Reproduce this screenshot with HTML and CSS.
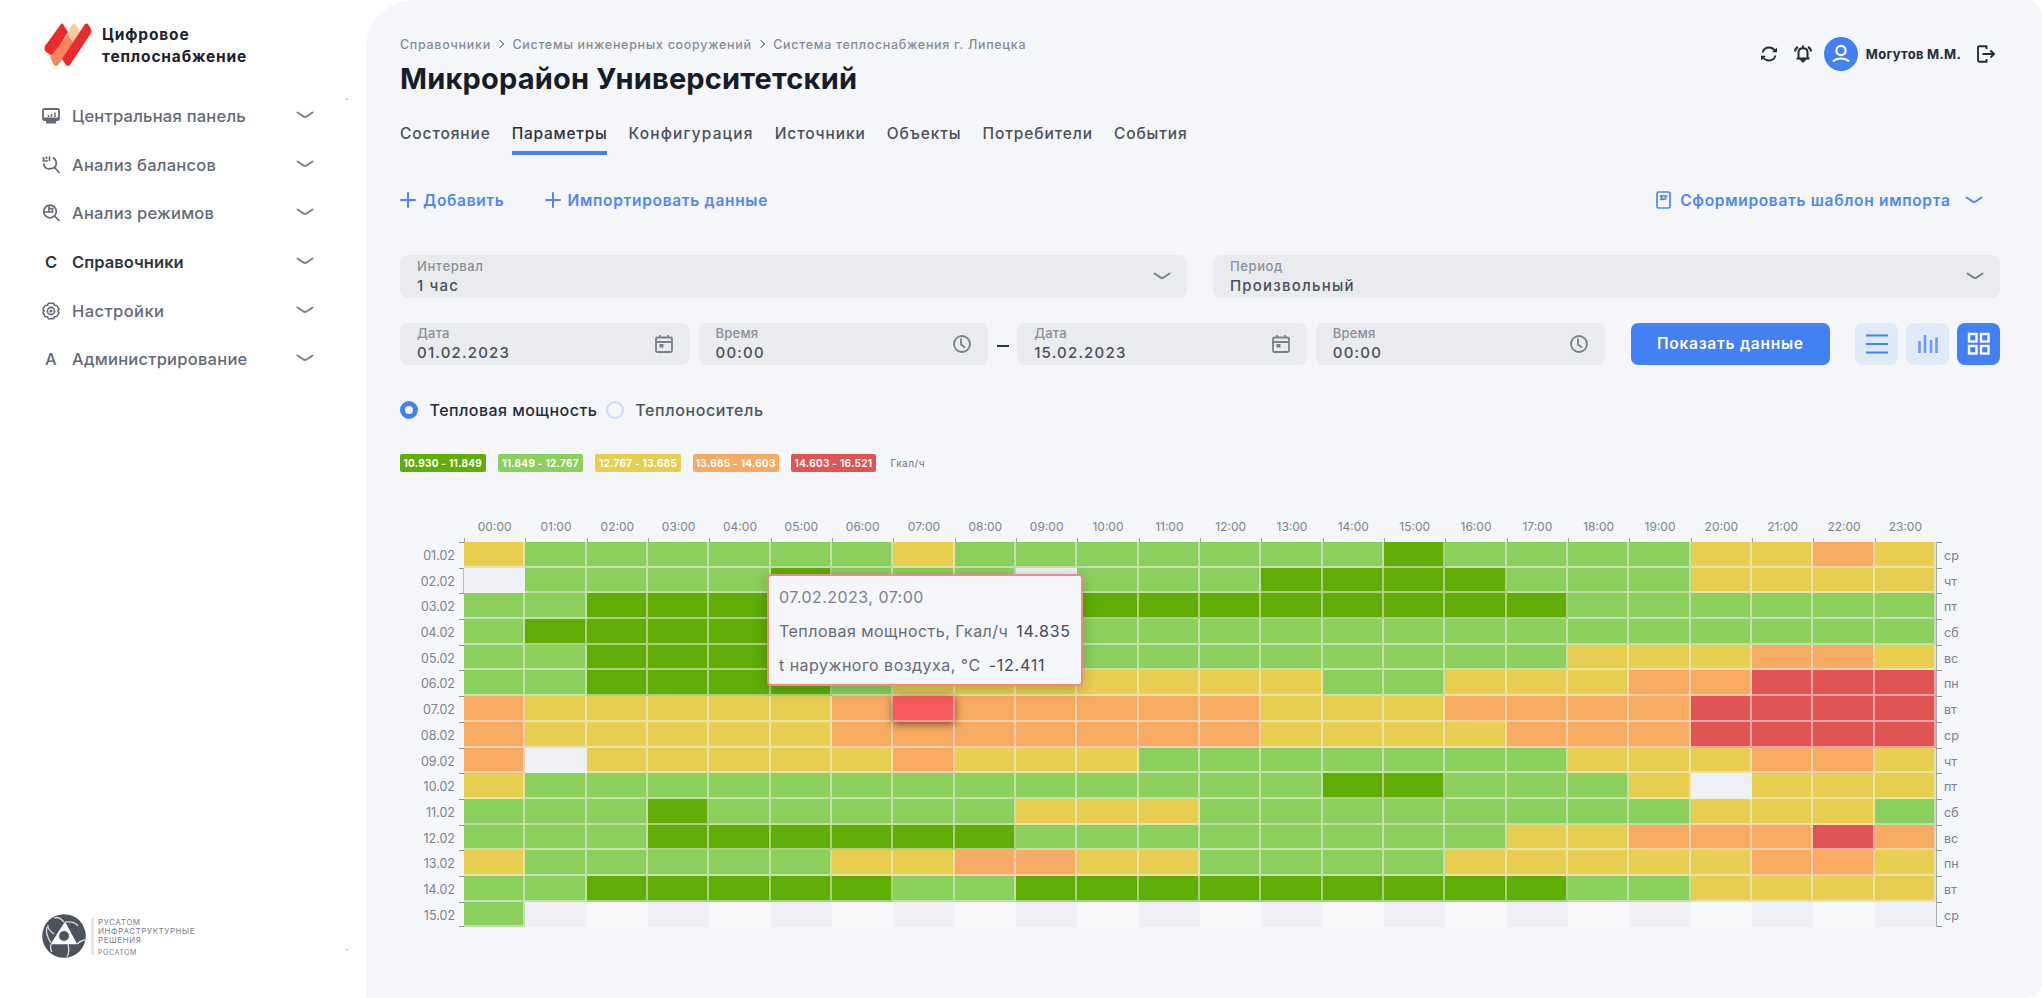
FILE: index.html
```html
<!DOCTYPE html>
<html lang="ru">
<head>
<meta charset="utf-8">
<title>Цифровое теплоснабжение</title>
<link rel="stylesheet" href="styles.css">
</head>
<body>
<svg width="0" height="0" class="sprite">
  <symbol id="chev" viewBox="0 0 18 8"><path d="M1.5 1.5L7 5.2Q9 6.6 11 5.2L16.5 1.5" fill="none" stroke="currentColor" stroke-width="2" stroke-linecap="round"/></symbol>
  <symbol id="plus" viewBox="0 0 16 16"><path d="M8 1v14M1 8h14" stroke="currentColor" stroke-width="2" stroke-linecap="round"/></symbol>
  <symbol id="cal" viewBox="0 0 20 20"><path d="M2 5q0-1.500 1.500-1.500h13Q18 3.500 18 5v11.500q0 1.500-1.500 1.500h-13Q2 18 2 16.500zM2 8h16M6 1v3.500M14 1v3.500" fill="none" stroke="currentColor" stroke-width="1.800"/><rect x="5.500" y="10" width="4" height="3.500" fill="currentColor"/></symbol>
  <symbol id="clock" viewBox="0 0 20 20"><circle cx="10" cy="10" r="8" fill="none" stroke="currentColor" stroke-width="1.800"/><path d="M9 4.500v6l4 3" fill="none" stroke="currentColor" stroke-width="1.800"/></symbol>
</svg>
<div class="app">
  <aside class="side">
    <div class="brand">
      <svg width="48" height="44" viewBox="0 0 48 44">
        <path d="M28 2Q30 0 32 2L36 8 24 28 18 20z" fill="#fbcb9c"/>
        <path d="M17 1Q18 0 19 1L24 9 9 34 1 28Q0 26 1 23z" fill="#e82c2e"/>
        <path d="M24 12L30 21 14 42Q12 44 10 42L6 34z" fill="#f6845f"/>
        <path d="M41 1Q43 0 44 1L47 6Q48 8 47 10L26 42Q24 44 22 42L18 36z" fill="#e82c2e"/>
      </svg>
      <div class="brand-name">Цифровое<br>теплоснабжение</div>
    </div>
    <nav class="menu">
      <a class="item"><span class="mi"><svg width="18" height="18" viewBox="0 0 18 18" fill="none" stroke="currentColor"><rect x="1" y="2" width="16" height="11" rx="1.500" stroke-width="1.800"/><path d="M1 11.500h16" stroke-width="2"/><path d="M4 15h10" stroke-width="3"/><path d="M6.500 10V8M9.500 10V7M13 10V5.500" stroke-width="1.500"/></svg></span><span>Центральная панель</span><svg class="chev" width="18" height="8"><use href="#chev"/></svg></a>
      <a class="item"><span class="mi"><svg width="19" height="18" viewBox="0 0 19 18" fill="none" stroke="currentColor" stroke-width="1.700"><path d="M11 1.500Q16 5 13.500 10.500 9 14.500 4 12 2 10.500 1.500 7.500M12.500 11.500L17.500 17"/><path d="M1.500 1v4h4.500M4.500 3V.5M7.500 5V.5"/></svg></span><span>Анализ балансов</span><svg class="chev" width="18" height="8"><use href="#chev"/></svg></a>
      <a class="item"><span class="mi"><svg width="19" height="18" viewBox="0 0 19 18" fill="none" stroke="currentColor" stroke-width="1.700"><circle cx="8" cy="7.500" r="6.300"/><path d="M12.500 12L17.500 17M7 1v7H2"/><path d="M7 4.500h3.500V8H7"/></svg></span><span>Анализ режимов</span><svg class="chev" width="18" height="8"><use href="#chev"/></svg></a>
      <a class="item on"><span class="mi">С</span><span>Справочники</span><svg class="chev" width="18" height="8"><use href="#chev"/></svg></a>
      <a class="item wide"><span class="mi"><svg width="18" height="18" viewBox="0 0 18 18" fill="none" stroke="currentColor" stroke-width="1.600"><path d="M6.500 1.200h5l1 2 2.300.2 2.200 3.800-1.200 1.800 1.200 1.800-2.200 3.800-2.300.2-1 2h-5l-1-2-2.300-.2L1 10.800 2.200 9 1 7.200l2.200-3.800 2.300-.2z"/><circle cx="9" cy="9" r="3.600"/><circle cx="9" cy="9" r=".8"/></svg></span><span>Настройки</span><svg class="chev" width="18" height="8"><use href="#chev"/></svg></a>
      <a class="item"><span class="mi">А</span><span>Администрирование</span><svg class="chev" width="18" height="8"><use href="#chev"/></svg></a>
    </nav>
    <i class="scroll up"></i><i class="scroll down"></i>
    <div class="owner">
      <svg width="44" height="44" viewBox="0 0 44 44">
        <circle cx="22" cy="22" r="21.800" fill="#4d535e"/>
        <path d="M23 9L34 29.500H10z" fill="#fff" stroke="#fff" stroke-width="1.500" stroke-linejoin="round"/>
        <circle cx="22" cy="22" r="5" fill="#4d535e"/>
        <g fill="none" stroke="#d9dce0" stroke-width="1.300"><path d="M22 8Q17 2 12 4M23 8Q33 7 36 12M9 29Q3 20 5 13M9 30Q8 36 10 38M35 30Q40 26 43 26M26 30Q28 38 25 43M12 20Q5 15 6 11"/></g>
      </svg>
      <div class="owner-text"><span>РУСАТОМ</span><span>ИНФРАСТРУКТУРНЫЕ</span><span>РЕШЕНИЯ</span><small>РОСАТОМ</small></div>
    </div>
  </aside>

  <main class="main">
    <header class="top">
      <div class="crumbs"><span>Справочники</span><i></i><span>Системы инженерных сооружений</span><i></i><span>Система теплоснабжения г. Липецка</span></div>
      <div class="user">
        <svg width="18" height="18" viewBox="0 0 18 18" fill="none" stroke="currentColor" stroke-width="1.800"><path d="M2.500 7.500Q4 2.500 9 2.500q4 0 6.500 4M15.500 10.500Q14 15.500 9 15.500q-4 0-6.500-4"/><path d="M17 2.500v4.800h-5zM1 15.500v-4.800h5z" fill="currentColor" stroke="none"/></svg>
        <svg class="bell" width="20" height="20" viewBox="0 0 20 20" fill="none" stroke="currentColor" stroke-width="2"><path d="M3.500 14.500h13M5.500 14V8.500Q5.500 4.200 10 4.200t4.500 4.300V14M10 4V1.500M2 7.500Q2 4.500 5 3M18 7.500Q18 4.500 15 3"/><path d="M8 15.500h4l-2 2z" fill="currentColor"/></svg>
        <span class="ava"><svg width="20" height="20" viewBox="0 0 20 20" fill="none" stroke="#fff" stroke-width="2.200"><circle cx="10" cy="6.500" r="4.600"/><path d="M2 17.500q3-3 8-3t8 3"/></svg></span>
        <b>Могутов М.М.</b>
        <svg class="out" width="20" height="18" viewBox="0 0 20 18" fill="none" stroke="currentColor" stroke-width="1.900"><path d="M10.500 4V1.200H3.200Q2 1.200 2 2.400v13.200q0 1.200 1.200 1.200h7.300V14M6.500 9H18M14.500 5.500L18 9l-3.500 3.500"/></svg>
      </div>
    </header>
    <h1 class="title">Микрорайон Университетский</h1>
    <div class="tabs"><a>Состояние</a><a class="on">Параметры</a><a>Конфигурация</a><a>Источники</a><a>Объекты</a><a>Потребители</a><a>События</a></div>
    <div class="actions">
      <a class="act add"><svg width="16" height="16"><use href="#plus"/></svg><span>Добавить</span></a>
      <a class="act"><svg width="16" height="16"><use href="#plus"/></svg><span>Импортировать данные</span></a>
      <a class="act tpl"><svg width="15" height="18" viewBox="0 0 15 18" fill="none" stroke="currentColor" stroke-width="1.700"><rect x="1" y="1" width="13" height="16" rx="1.500"/><path d="M3.500 5h8M5.500 5v3h4v-3M4 8.500h4"/></svg><span>Сформировать шаблон импорта</span><svg class="chev" width="18" height="8"><use href="#chev"/></svg></a>
    </div>
    <div class="row sel">
      <div class="field"><div><label>Интервал</label><p>1 час</p></div><svg class="chev" width="18" height="8"><use href="#chev"/></svg></div>
      <div class="field"><div><label>Период</label><p>Произвольный</p></div><svg class="chev" width="18" height="8"><use href="#chev"/></svg></div>
    </div>
    <div class="row dates">
      <div class="field"><div><label>Дата</label><p>01.02.2023</p></div><svg width="20" height="20"><use href="#cal"/></svg></div>
      <div class="field"><div><label>Время</label><p>00:00</p></div><svg width="20" height="20"><use href="#clock"/></svg></div>
      <i class="dash"></i>
      <div class="field"><div><label>Дата</label><p>15.02.2023</p></div><svg width="20" height="20"><use href="#cal"/></svg></div>
      <div class="field"><div><label>Время</label><p>00:00</p></div><svg width="20" height="20"><use href="#clock"/></svg></div>
      <button class="show">Показать данные</button>
      <div class="views">
        <span class="view"><svg width="24" height="22" viewBox="0 0 24 22" stroke="currentColor" stroke-width="2.200"><path d="M1 2.500h22M1 11h22M1 19.500h22"/></svg></span>
        <span class="view"><svg width="22" height="22" viewBox="0 0 22 22" stroke="currentColor" stroke-width="2.600" opacity=".75"><path d="M2.500 20V8M8 20V2M14 20V7M19.500 20V4.500"/></svg></span>
        <span class="view on"><svg width="24" height="24" viewBox="0 0 24 24" fill="none" stroke="currentColor" stroke-width="2.400"><rect x="2" y="2" width="7.500" height="7.500"/><rect x="14" y="2" width="7.500" height="7.500"/><rect x="2" y="14" width="7.500" height="7.500"/><rect x="14" y="14" width="7.500" height="7.500"/></svg></span>
      </div>
    </div>
    <div class="radios"><i class="radio on"></i><span class="on">Тепловая мощность</span><i class="radio"></i><span>Теплоноситель</span></div>
    <div class="legend"><b class="D">10.930 - 11.849</b><b class="L">11.849 - 12.767</b><b class="Y">12.767 - 13.685</b><b class="O">13.685 - 14.603</b><b class="R">14.603 - 16.521</b><em>Гкал/ч</em></div>
    <div class="chart">
      <div class="hours" id="hours"></div>
      <div class="rows" id="rows"></div>
      <div class="tip">
        <p class="when">07.02.2023, 07:00</p>
        <p>Тепловая мощность, Гкал/ч <b>14.835</b></p>
        <p>t наружного воздуха, °C <b>-12.411</b></p>
      </div>
    </div>
  </main>
</div>
<script src="chart.js"></script>
</body>
</html>
```
FILE: chart.js
```js
// One string per day, one letter per hour; letters are the colour classes in styles.css.
var data = [
  'YLLLLLLYLLLLLLLDLLLLYYOY',
  'NLLLLDLLLNLLLDDDDLLLYYYY',
  'LLDDDDDDDDDDDDDDDDLLLLLL',
  'LDDDDDDDDDLLLLLLLLLLLLLL',
  'LLDDDDLLLLLLLLLLLLYYYOOY',
  'LLDDDDLYYYYYYYLLYYYOORRR',
  'OYYYYYOHOOOOOYYYOOOORRRR',
  'OYYYYYOOOOOOOYYYYOOORRRR',
  'ONYYYYYOYYYLLLLLLLYYYOOY',
  'YLLLLLLLLLLLLLDDLLLYNYYY',
  'LLLDLLLLLYYYLLLLLLLLYYYL',
  'LLLDDDDDDLLLLLLLLYYOOORO',
  'YLLLLLYYOOYYLLLLYYYYYOOY',
  'LLDDDDDLLDDDDDDDDDLLYYYY',
  'LNENENENENENENENENENENEN'
];
var days = ['ср', 'чт', 'пт', 'сб', 'вс', 'пн', 'вт'];
function pad(n) { return (n < 10 ? '0' : '') + n; }
var hours = '';
for (var h = 0; h < 24; h++) hours += '<span>' + pad(h) + ':00</span>';
document.getElementById('hours').innerHTML = hours;
document.getElementById('rows').innerHTML = data.map(function (line, i) {
  var cells = line.split('').map(function (c) { return '<i class="cell ' + c + '"></i>'; }).join('');
  return '<div class="line"><span class="date">' + pad(i + 1) + '.02</span><div class="cells">' + cells +
    '</div><span class="day">' + days[i % 7] + '</span></div>';
}).join('');
```
FILE: styles.css
```css
* { box-sizing: border-box; }
body { margin: 0; background: #fff; font-family: Inter, "Noto Sans", sans-serif; color: #4f5560; }
p, h1 { margin: 0; }
svg { display: block; flex: none; }
.sprite { position: absolute; }
.app { display: flex; width: 2042px; height: 998px; border-radius: 16px; overflow: hidden; background: #fff; }

.side { position: relative; width: 366px; display: flex; flex-direction: column; padding: 23px 0 40px 41px; }
.brand { display: flex; gap: 10px; padding-left: 3px; }
.brand-name { font-size: 15.500px; line-height: 21.500px; font-weight: 700; letter-spacing: .85px; color: #1d2230; padding-top: 1px; }
.menu { display: flex; flex-direction: column; padding-top: 24.500px; }
.item { display: flex; align-items: center; height: 48.700px; font-size: 16.500px; font-weight: 500; letter-spacing: .25px; width: 273px; color: #646a75; }
.item .mi { width: 20px; margin-right: 11px; display: flex; justify-content: center; }
.item .chev { margin-left: auto; margin-top: -2px; color: #7d828c; }
.item.on { color: #303642; font-weight: 600; letter-spacing: .05px; }
.item.wide { letter-spacing: .44px; }
.scroll { position: absolute; left: 345px; border: 2px solid transparent; }
.scroll.up { top: 96px; border-bottom-color: #c5c8cc; }
.scroll.down { top: 949px; border-top-color: #c5c8cc; }
.owner { display: flex; margin-top: auto; align-items: center; gap: 5px; padding-left: 1px; }
.owner-text { border-left: 3px solid #e4e6ea; height: 37px; padding-left: 4px; display: flex; flex-direction: column; font-size: 8px; line-height: 9px; letter-spacing: .57px; color: #7a808a; align-items: flex-start; }
.owner-text small { font-size: 7px; margin-top: 3px; }

.main { flex: 1; background: #f4f6f9; border-radius: 48px 0 0 0; padding: 36px 42px 0 34px; }
.top { display: flex; justify-content: space-between; height: 16px; }
.crumbs { display: flex; align-items: center; font-size: 12.500px; font-weight: 500; letter-spacing: .7px; color: #868c96; }
.crumbs i { width: 6px; height: 6px; border: solid #6b717b; border-width: 1.500px 1.500px 0 0; transform: rotate(45deg); margin: 0 9.500px 0 6px; }
.user { display: flex; align-items: center; color: #262b35; height: 36px; padding-right: 4px; }
.user b { font-size: 13px; font-weight: 700; letter-spacing: .27px; margin-left: 7.500px; }
.bell { margin: 0 11px 0 15px; }
.ava { width: 34px; height: 34px; border-radius: 50%; background: #4280f4; display: flex; align-items: center; justify-content: center; }
.out { margin-left: 15px; }
.title { font-size: 29px; line-height: 40px; font-weight: 700; letter-spacing: .19px; color: #171c28; margin-top: 6.500px; }
.tabs { display: flex; gap: 21px; margin-top: 18px; font-size: 15.500px; font-weight: 500; letter-spacing: .9px; color: #4a505b; }
.tabs a { height: 38.500px; line-height: 33px; }
.tabs .on { border-bottom: 4px solid #4280f4; color: #2c323e; letter-spacing: .73px; }
.tabs a:nth-child(3) { letter-spacing: 1.150px; }
.actions { display: flex; margin-top: 29px; height: 32px; color: #4f86f4; font-size: 15.500px; font-weight: 600; letter-spacing: .68px; }
.act { display: flex; align-items: center; gap: 7px; }
.add { margin-right: 40px; }
.tpl { margin-left: auto; gap: 9px; margin-right: 17px; }
.tpl .chev { margin-left: 5.500px; }

.row { display: flex; height: 42.500px; }
.field { background: #e9ebee; border-radius: 8px; display: flex; justify-content: space-between; align-items: center; padding: 0 16px 0 17px; color: #7a808a; }
.field label { display: block; font-size: 13px; line-height: 19px; font-weight: 500; letter-spacing: .6px; color: #8b9099; }
.field p { font-size: 15px; line-height: 20px; font-weight: 500; letter-spacing: 1.200px; color: #4a4f5a; }
.sel { margin-top: 39px; gap: 26px; }
.sel .field { flex: 1; }
.dates { margin-top: 25px; gap: 9px; }
.dates .field { width: 289.600px; }
.dates label { letter-spacing: .2px; }
.dash { width: 12px; height: 2px; background: #2c323e; align-self: center; margin: 4px -.5px 0; }
.show { margin-left: 16.500px; width: 199px; padding: 0; border: 0; border-radius: 7px; background: #4280f4; color: #fff; font: 600 15.500px Inter, sans-serif; letter-spacing: .74px; }
.views { display: flex; gap: 8px; margin-left: auto; }
.view { width: 43px; border-radius: 8px; background: #e0e9f8; color: #4280f4; display: flex; align-items: center; justify-content: center; }
.view.on { background: #4280f4; color: #fff; }

.radios { display: flex; align-items: center; height: 20px; margin-top: 34.500px; font-size: 16px; font-weight: 500; letter-spacing: .6px; }
.radio { width: 18px; height: 18px; border: 2px solid #c9dcfa; border-radius: 50%; }
.radio.on { border: 5px solid #4280f4; }
.radio + span { margin: 0 8.500px 0 11.500px; }
.radios span.on { color: #262c38; letter-spacing: .46px; }
.legend { display: flex; align-items: center; gap: 12.200px; margin-top: 34.500px; height: 18px; font-size: 10px; letter-spacing: .28px; }
.legend b { width: 85.500px; height: 17.500px; border-radius: 2px; color: #fff; display: flex; align-items: center; justify-content: center; }
.legend em { font-style: normal; color: #6b717b; letter-spacing: .52px; margin-left: 2px; }

.D { background: #5fad05; }
.L { background: #8bd05c; }
.Y { background: #e7ce50; }
.O { background: #f6aa62; }
.R { background: #e25353; }
.N { background: #eef0f6; }
.E { background: #f7f8f9; }

.chart { position: relative; margin-top: 44px; }
.hours { display: grid; grid-template-columns: repeat(24, 1fr); margin: 0 64px; height: 26px; font-size: 12px; line-height: 21px; text-align: center; color: #7d828b; background: repeating-linear-gradient(90deg, #9a9ea6 0 1px, transparent 1px 61.333px) bottom / 100% 4px no-repeat; }
.rows { background: linear-gradient(#a9adb4, #a9adb4) 63px 0 / 1px 100% no-repeat; }
.line { display: flex; height: 25.690px; align-items: center; }
.date, .day { font-size: 12.500px; height: 100%; line-height: 27.500px; color: #7d828b; background: linear-gradient(#8d9199, #8d9199) no-repeat; }
.date { width: 64px; padding-right: 9px; text-align: right; background-size: 5px 1px; background-position: 59px 0; }
.line:nth-child(2) .date { border-right: 1px solid #b9bcc3; padding-right: 8px; }
.rows { background: none; }
.cells { display: grid; grid-template-columns: repeat(24, 1fr); width: 1472px; height: 100%; }
.cell { box-shadow: inset -2px -2px rgba(244, 246, 249, .5); }
.cell.N, .cell.E { box-shadow: none; }
.cell.H { position: relative; background: #f65a5a; box-shadow: inset -2px -2px rgba(244, 246, 249, .4), 0 2px 8px rgba(60, 40, 20, .7); }
.day { padding-left: 7px; line-height: 28px; border-left: 1.500px solid #a9adb4; background-size: 5px 1px; }
.line:last-child .date { background: linear-gradient(#8d9199, #8d9199) 59px 0 / 5px 1px no-repeat, linear-gradient(#8d9199, #8d9199) 59px 100% / 5px 1px no-repeat; }
.line:last-child .day { background: linear-gradient(#8d9199, #8d9199) 0 0 / 5px 1px no-repeat, linear-gradient(#8d9199, #8d9199) 0 100% / 5px 1px no-repeat; }

.tip { position: absolute; left: 367px; top: 58px; width: 316px; height: 112px; border: 2px solid #ee8a88; border-radius: 4px; background: #f4f6f9; box-shadow: 0 3px 14px rgba(0, 0, 0, .22); padding: 4px 10px; font-size: 16px; line-height: 34px; letter-spacing: .47px; color: #666b76; white-space: nowrap; }
.tip b { font-weight: 400; color: #454a55; margin-left: 3px; letter-spacing: .75px; }
.tip .when { color: #7d828b; }
```
